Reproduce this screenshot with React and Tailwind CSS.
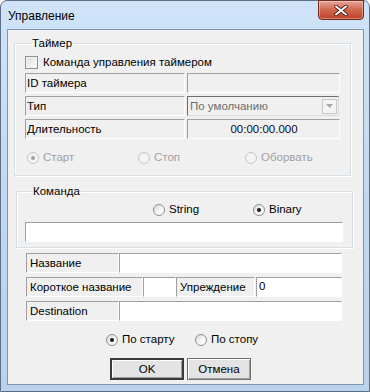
import React from "react";

const font = { fontFamily: '"Liberation Sans", Arial, sans-serif' };

function Radio({ checked, disabled }) {
  return (
    <span
      className={
        "relative flex h-[12px] w-[12px] shrink-0 items-center justify-center rounded-full border " +
        (disabled
          ? "border-[#c6c6c6] bg-[#f4f4f4]"
          : "border-[#8e8f8f] bg-gradient-to-br from-[#d6d6d6] via-[#f4f4f4] to-white")
      }
    >
      {checked && (
        <span
          className={
            "h-[4px] w-[4px] rounded-full " +
            (disabled ? "bg-[#a0a0a0]" : "bg-[#1a1a1a]")
          }
        />
      )}
    </span>
  );
}

function RadioLabel({ checked, disabled, children }) {
  return (
    <span className="flex items-center gap-[4px]">
      <Radio checked={checked} disabled={disabled} />
      <span className={disabled ? "text-[#a0a0a0]" : "text-black"}>{children}</span>
    </span>
  );
}

const sunken =
  "border border-t-[#a0a0a0] border-l-[#a0a0a0] border-r-white border-b-white";

export default function App() {
  return (
    <div className="h-[392px] w-[370px] bg-white text-[11.5px] leading-[13px] text-black" style={font}>
      <div className="flex h-[392px] w-[370px] flex-col rounded-t-[7px] border border-[#5e6f84] bg-gradient-to-b from-[#cfe4f9] via-[#c0d8f1] to-[#b9d2ed]">
        {/* title bar */}
        <div className="flex h-[28px] items-start">
          <span className="ml-[7px] mt-[8px] text-[12px] leading-[14px] text-black">Управление</span>
          <div className="ml-auto mr-[5px] mt-[-1px] flex h-[20px] w-[46px] items-center justify-center rounded-b-[4px] border border-[#6e2b22] bg-gradient-to-b from-[#e4a597] via-[#d2654c] to-[#c0412a] shadow-[inset_0_0_0_1px_rgba(255,255,255,0.35)]">
            <svg width="14" height="11" viewBox="0 0 14 11">
              <path d="M2 1.5 L12 9.5 M12 1.5 L2 9.5" stroke="#4a1a12" strokeWidth="3.6" strokeLinecap="round" />
              <path d="M2 1.5 L12 9.5 M12 1.5 L2 9.5" stroke="#ffffff" strokeWidth="2" strokeLinecap="round" />
            </svg>
          </div>
        </div>

        {/* client area */}
        <div className="ml-[6px] flex h-[356px] w-[357px] flex-col border border-[#8296ad] bg-[#f0f0f0]">
          {/* Timer group */}
          <fieldset className="ml-[6px] mt-[7px] h-[139px] w-[337px] border border-[#d5dfe5] px-[10px] shadow-[inset_1px_1px_0_#fff,1px_1px_0_#fff]">
            <legend className="ml-[6px] px-[1px] leading-[13px]">Таймер</legend>
            <div className="mt-[6px] flex h-[13px] items-center gap-[5px]">
              <span className="h-[13px] w-[13px] border border-[#8e8f8f] bg-gradient-to-br from-[#dadada] to-white shadow-[inset_0_0_0_1px_#f4f4f4]" />
              <span>Команда управления таймером</span>
            </div>
            <div className="mt-[4px] flex flex-col gap-[3px]">
              <div className="flex h-[20px] gap-[2px]">
                <div className={"flex w-[160px] items-center pl-[1px] " + sunken}>ID таймера</div>
                <div className={"w-[153px] " + sunken} />
              </div>
              <div className="flex h-[20px] gap-[2px]">
                <div className={"flex w-[160px] items-center pl-[1px] " + sunken}>Тип</div>
                <div className="flex w-[152px] items-center justify-between border border-t-[#6d6d6d] border-l-[#6d6d6d] border-r-[#dcdcdc] border-b-[#dcdcdc] pl-[2px] pr-[1px]">
                  <span className="text-[#6d6d6d]">По умолчанию</span>
                  <span className="flex h-[15px] w-[15px] items-center justify-center border border-[#c8c8c8] bg-[#f4f4f4]">
                    <svg width="7" height="4" viewBox="0 0 7 4">
                      <path d="M0 0 H7 L3.5 4 Z" fill="#a8a8a8" />
                    </svg>
                  </span>
                </div>
              </div>
              <div className="flex h-[20px] gap-[2px]">
                <div className={"flex w-[160px] items-center pl-[1px] " + sunken}>Длительность</div>
                <div className={"flex w-[153px] items-center justify-center " + sunken}>
                  <span className="pl-[1px] text-[#0a0a1a]">00:00:00.000</span>
                </div>
              </div>
            </div>
            <div className="mt-[12px] flex h-[13px] items-center pl-[2px]">
              <span className="w-[111px]">
                <RadioLabel checked disabled>Старт</RadioLabel>
              </span>
              <span className="w-[107px]">
                <RadioLabel disabled>Стоп</RadioLabel>
              </span>
              <RadioLabel disabled>Оборвать</RadioLabel>
            </div>
          </fieldset>

          {/* Command group */}
          <fieldset className="ml-[8px] mt-[9px] h-[63px] w-[337px] border border-[#d5dfe5] px-[8px] shadow-[inset_1px_1px_0_#fff,1px_1px_0_#fff]">
            <legend className="ml-[7px] px-[1px] leading-[13px]">Команда</legend>
            <div className="mt-[5px] flex h-[13px] items-center pl-[128px]">
              <span className="w-[100px]">
                <RadioLabel>String</RadioLabel>
              </span>
              <RadioLabel checked>Binary</RadioLabel>
            </div>
            <div className={"mt-[6px] h-[20px] w-[318px] bg-white " + sunken} />
          </fieldset>

          {/* bottom fields */}
          <div className="ml-[18px] mt-[5px] flex w-[316px] flex-col gap-[4px]">
            <div className="flex h-[20px]">
              <div className={"flex w-[93px] items-center pl-[3px] " + sunken}>Название</div>
              <div className={"flex-1 bg-white " + sunken} />
            </div>
            <div className="flex h-[20px]">
              <div className={"flex w-[117px] items-center pl-[3px] " + sunken}>Короткое название</div>
              <div className={"w-[33px] bg-white " + sunken} />
              <div className={"flex w-[79px] items-center pl-[3px] " + sunken}>Упреждение</div>
              <div className={"ml-[1px] flex-1 bg-white pl-[2px] pt-[2px] " + sunken}>0</div>
            </div>
            <div className="flex h-[20px]">
              <div className={"flex w-[93px] items-center pl-[3px] " + sunken}>Destination</div>
              <div className={"flex-1 bg-white " + sunken} />
            </div>
          </div>

          <div className="mt-[12px] flex h-[13px] items-center pl-[98px]">
            <span className="w-[89px]">
              <RadioLabel checked>По старту</RadioLabel>
            </span>
            <RadioLabel>По стопу</RadioLabel>
          </div>

          <div className="ml-[102px] mt-[12px] flex gap-[3px]">
            <button className="flex h-[22px] w-[74px] items-center justify-center border-2 border-[#3a3a3a] bg-[#e3e3e3] shadow-[inset_1px_1px_0_#fff,inset_-1px_-1px_0_#a0a0a0]">
              OK
            </button>
            <button className="flex h-[22px] w-[64px] items-center justify-center border border-[#707070] bg-[#e3e3e3] shadow-[inset_1px_1px_0_#fff,inset_-1px_-1px_0_#a0a0a0]">
              Отмена
            </button>
          </div>
        </div>
      </div>
    </div>
  );
}
